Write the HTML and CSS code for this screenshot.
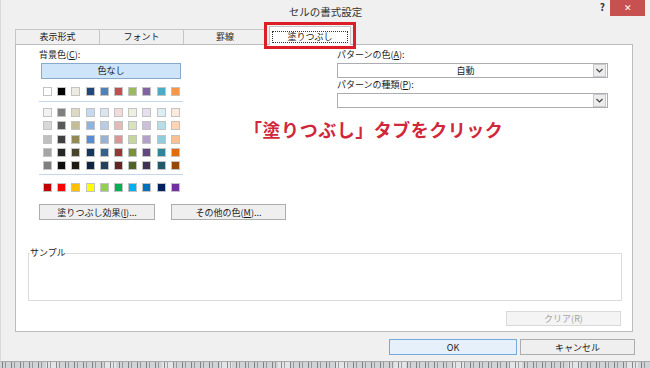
FILE: index.html
```html
<!DOCTYPE html>
<html lang="ja">
<head>
    <meta charset="UTF-8">
    <meta name="viewport" content="width=device-width, initial-scale=1.0">
    <link rel="stylesheet" href="styles.css">
</head>
<body>
    <div class="window">
        <div class="titlebar">
            <span></span>
            <div class="title">セルの書式設定</div>
            <div class="controls">
                <span class="help">?</span>
                <span class="close">✕</span>
            </div>
        </div>

        <div class="dialog">
            <div class="tabs">
                <div class="tab">表示形式</div>
                <div class="tab">フォント</div>
                <div class="tab">罫線</div>
                <div class="tab active"><span class="focus">塗りつぶし</span></div>
            </div>

            <div class="panel">
                <div class="columns">
                    <div class="bg-col">
                        <div class="label">背景色(<u>C</u>):</div>
                        <div class="no-color">色なし</div>

                        <div class="swatches">
                            <i style="background:#ffffff"></i><i style="background:#000000"></i><i style="background:#eeece1"></i><i style="background:#1f497d"></i><i style="background:#4f81bd"></i><i style="background:#c0504d"></i><i style="background:#9bbb59"></i><i style="background:#8064a2"></i><i style="background:#4bacc6"></i><i style="background:#f79646"></i>
                        </div>
                        <div class="sep"></div>
                        <div class="swatches shades">
                            <i style="background:#f2f2f2"></i><i style="background:#7f7f7f"></i><i style="background:#ddd9c4"></i><i style="background:#c6d9f0"></i><i style="background:#dbe5f1"></i><i style="background:#f2dcdb"></i><i style="background:#ebf1dd"></i><i style="background:#e5e0ec"></i><i style="background:#dbeef3"></i><i style="background:#fdeada"></i>
                            <i style="background:#d8d8d8"></i><i style="background:#595959"></i><i style="background:#c4bd97"></i><i style="background:#8db3e2"></i><i style="background:#b8cce4"></i><i style="background:#e5b9b7"></i><i style="background:#d7e3bc"></i><i style="background:#ccc1d9"></i><i style="background:#b7dde8"></i><i style="background:#fbd5b5"></i>
                            <i style="background:#bfbfbf"></i><i style="background:#3f3f3f"></i><i style="background:#938953"></i><i style="background:#548dd4"></i><i style="background:#95b3d7"></i><i style="background:#d99694"></i><i style="background:#c3d69b"></i><i style="background:#b2a2c7"></i><i style="background:#92cddc"></i><i style="background:#fac08f"></i>
                            <i style="background:#a5a5a5"></i><i style="background:#262626"></i><i style="background:#494429"></i><i style="background:#17365d"></i><i style="background:#366092"></i><i style="background:#953734"></i><i style="background:#76923c"></i><i style="background:#5f497a"></i><i style="background:#31859b"></i><i style="background:#e36c09"></i>
                            <i style="background:#7f7f7f"></i><i style="background:#0c0c0c"></i><i style="background:#1d1b10"></i><i style="background:#0f243e"></i><i style="background:#244061"></i><i style="background:#632423"></i><i style="background:#4f6128"></i><i style="background:#3f3151"></i><i style="background:#205867"></i><i style="background:#974806"></i>
                        </div>
                        <div class="sep sep-low"></div>
                        <div class="swatches standard">
                            <i style="background:#c00000"></i><i style="background:#ff0000"></i><i style="background:#ffc000"></i><i style="background:#ffff00"></i><i style="background:#92d050"></i><i style="background:#00b050"></i><i style="background:#00b0f0"></i><i style="background:#0070c0"></i><i style="background:#002060"></i><i style="background:#7030a0"></i>
                        </div>

                        <div class="btn-row">
                            <button class="btn">塗りつぶし効果(<u>I</u>)...</button>
                            <button class="btn">その他の色(<u>M</u>)...</button>
                        </div>
                    </div>

                    <div class="pattern-col">
                        <div class="label">パターンの色(<u>A</u>):</div>
                        <div class="select">
                            <span class="value">自動</span>
                            <span class="arrow"><svg width="7" height="5" viewBox="0 0 7 5"><polyline points="0.5,1 3.5,4 6.5,1" fill="none" stroke="#444" stroke-width="1.2"/></svg></span>
                        </div>
                        <div class="label label-2">パターンの種類(<u>P</u>):</div>
                        <div class="select">
                            <span class="value"></span>
                            <span class="arrow"><svg width="7" height="5" viewBox="0 0 7 5"><polyline points="0.5,1 3.5,4 6.5,1" fill="none" stroke="#444" stroke-width="1.2"/></svg></span>
                        </div>
                    </div>
                </div>

                <fieldset class="sample">
                    <legend>サンプル</legend>
                </fieldset>

                <div class="clear-row">
                    <button class="btn clear" disabled>クリア(R)</button>
                </div>
            </div>

            <div class="actions">
                <button class="btn ok">OK</button>
                <button class="btn cancel">キャンセル</button>
            </div>
        </div>

        <!-- 注釈 -->
        <div class="mark-box"></div>
        <div class="mark-text">「塗りつぶし」タブをクリック</div>
    </div>
    <div class="underlay"></div>
</body>
</html>
```

FILE: styles.css
```css
* {
    box-sizing: border-box;
    margin: 0;
    padding: 0;
}

body {
    width: 650px;
    height: 368px;
    overflow: hidden;
    background: #f0f0f0;
    font-family: "Noto Sans CJK JP", "Noto Sans", sans-serif;
    font-size: 9px;
    color: #1a1a1a;
}

u {
    text-decoration: underline;
}

.window {
    position: relative;
    height: 362px;
    background: #f0f0f0;
    border-bottom: 1px solid #a9a9a9;
    border-left: 1px solid #dadada;
}

/* タイトルバー */
.titlebar {
    display: grid;
    grid-template-columns: 1fr auto 1fr;
    height: 22px;
}

.title {
    font-size: 10.5px;
    line-height: 24px;
    color: #333;
}

.controls {
    justify-self: end;
    display: flex;
    align-items: flex-start;
    gap: 5px;
    margin-right: 5px;
}

.help {
    font-size: 10px;
    font-weight: bold;
    line-height: 14px;
    color: #333;
}

.close {
    width: 35px;
    height: 16px;
    background: #c75050;
    color: #fff;
    font-size: 9px;
    line-height: 16px;
    text-align: center;
}

/* 本体 */
.dialog {
    padding: 4px 15px 0 14px;
}

.tabs {
    display: flex;
    align-items: flex-end;
    height: 18px;
}

.tab {
    width: 84px;
    height: 15px;
    border: 1px solid #c6c6c6;
    border-bottom: none;
    border-right: none;
    background: #f0f0f0;
    text-align: center;
    line-height: 14px;
}

.tab:nth-child(3) {
    border-right: 1px solid #c6c6c6;
}

.tab.active {
    position: relative;
    z-index: 1;
    width: 82px;
    height: 19px;
    margin-left: 2px;
    margin-bottom: -1px;
    padding: 4px 2px 2px;
    background: #fff;
    border-right: 1px solid #c6c6c6;
}

.focus {
    display: block;
    height: 12px;
    border: 1px dotted #333;
    line-height: 10px;
}

.panel {
    width: 618px;
    height: 288px;
    background: #fff;
    border: 1px solid #bcbcbc;
}

.columns {
    display: grid;
    grid-template-columns: 298px 271px;
    padding: 4px 0 0 23px;
}

.label {
    height: 12px;
    line-height: 12px;
}

.no-color {
    width: 140px;
    height: 16px;
    margin: 2px 0 0 2px;
    background: #cde4f9;
    border: 1px solid #87a9cc;
    text-align: center;
    line-height: 14px;
}

.swatches {
    display: grid;
    grid-template-columns: repeat(10, 9px);
    column-gap: 5.2px;
    margin: 8px 0 0 4px;
}

.swatches i {
    display: block;
    height: 9px;
    border: 1px solid #c3c3c3;
}

.shades {
    row-gap: 4.25px;
    margin-top: 6px;
}

.sep {
    width: 144px;
    height: 1px;
    margin-top: 5px;
    background: #c6d6e6;
}

.sep-low {
    margin-top: 4px;
}

.btn-row {
    display: flex;
    gap: 16px;
    margin-top: 12px;
}

.btn {
    width: 116px;
    height: 16px;
    background: #efefef;
    border: 1px solid #adadad;
    font-family: inherit;
    font-size: 9px;
    color: #1a1a1a;
    line-height: 13px;
}

.btn-row .btn + .btn {
    width: 115px;
}

.select {
    display: flex;
    height: 15px;
    margin-top: 2px;
    border: 1px solid #abadb3;
}

.select .value {
    flex: 1;
    text-align: center;
    line-height: 13px;
}

.select .arrow {
    display: flex;
    align-items: center;
    justify-content: center;
    width: 13px;
    margin: 0 1px 0 0;
    background: #ececec;
    border: 1px solid #c9c9c9;
}

.label-2 {
    margin-top: 1px;
}

.sample {
    height: 54px;
    margin: 27px 10px 0 12px;
    border: 1px solid #dcdcdc;
}

.sample legend {
    margin-left: 1px;
    line-height: 12px;
}

.clear-row {
    display: flex;
    justify-content: flex-end;
    margin: 10px 11px 0 0;
}

.clear {
    width: 115px;
    height: 15px;
    background: #f4f4f4;
    border-color: #d9d9d9;
    color: #a3a3a3;
}

.actions {
    display: flex;
    justify-content: flex-end;
    gap: 3px;
    margin: 7px 0 0 0;
}

.ok {
    width: 128px;
    background: #e6f0fa;
    border-color: #76a9dc;
}

.cancel {
    width: 115px;
}

/* 注釈 */
.mark-box {
    position: absolute;
    left: 263px;
    top: 22px;
    width: 92px;
    height: 27px;
    border: 3px solid #dc1e26;
}

.mark-text {
    position: absolute;
    left: 243px;
    top: 116px;
    font-size: 18px;
    font-weight: bold;
    letter-spacing: 0.5px;
    line-height: 26px;
    color: #d0283a;
}

/* 下に見えているシートの一部 */
.underlay {
    height: 6px;
    background:
        repeating-linear-gradient(90deg, transparent 0 2px, rgba(60, 60, 60, 0.55) 2px 3px, transparent 3px 5px, rgba(60, 60, 60, 0.4) 5px 6px, transparent 6px 9px),
        repeating-linear-gradient(90deg, #cfd3d6 0 46px, #e2e4e6 46px 58px);
}
```
